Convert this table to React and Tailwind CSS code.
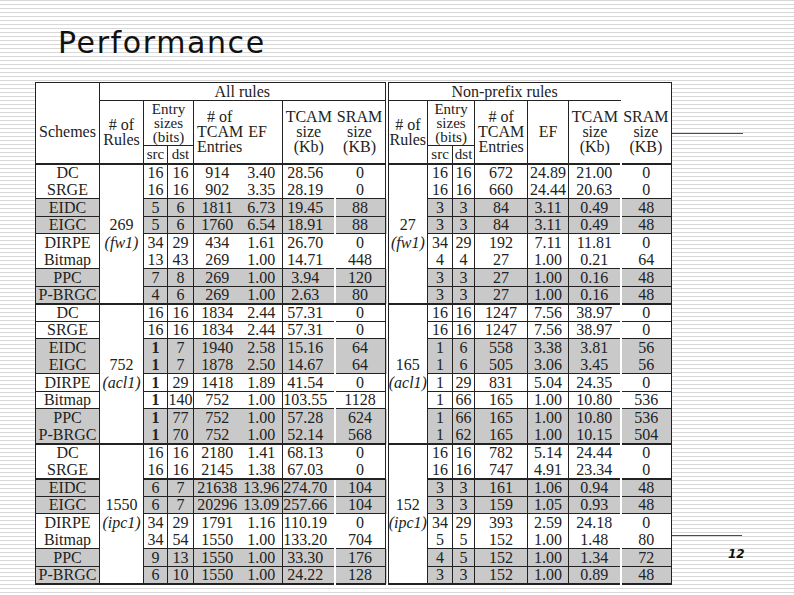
import React from 'react';

const schemes = ['DC', 'SRGE', 'EIDC', 'EIGC', 'DIRPE', 'Bitmap', 'PPC', 'P-BRGC'];
const shaded = [false, false, true, true, false, false, true, true];
const lineCls = ['', 'border-t', 'border-t-2'];

// each row: all rules (src, dst, entries, EF, TCAM, SRAM) then non-prefix rules (same)
const groups = [
  {
    all: ['269', 'fw1'],
    np: ['27', 'fw1'],
    lines: [0, 1, 1, 1, 0, 1, 1],
    rows: [
      ['16', '16', '914', '3.40', '28.56', '0', '16', '16', '672', '24.89', '21.00', '0'],
      ['16', '16', '902', '3.35', '28.19', '0', '16', '16', '660', '24.44', '20.63', '0'],
      ['5', '6', '1811', '6.73', '19.45', '88', '3', '3', '84', '3.11', '0.49', '48'],
      ['5', '6', '1760', '6.54', '18.91', '88', '3', '3', '84', '3.11', '0.49', '48'],
      ['34', '29', '434', '1.61', '26.70', '0', '34', '29', '192', '7.11', '11.81', '0'],
      ['13', '43', '269', '1.00', '14.71', '448', '4', '4', '27', '1.00', '0.21', '64'],
      ['7', '8', '269', '1.00', '3.94', '120', '3', '3', '27', '1.00', '0.16', '48'],
      ['4', '6', '269', '1.00', '2.63', '80', '3', '3', '27', '1.00', '0.16', '48'],
    ],
  },
  {
    all: ['752', 'acl1'],
    np: ['165', 'acl1'],
    lines: [1, 1, 0, 1, 1, 1, 0],
    boldOnes: true,
    rows: [
      ['16', '16', '1834', '2.44', '57.31', '0', '16', '16', '1247', '7.56', '38.97', '0'],
      ['16', '16', '1834', '2.44', '57.31', '0', '16', '16', '1247', '7.56', '38.97', '0'],
      ['1', '7', '1940', '2.58', '15.16', '64', '1', '6', '558', '3.38', '3.81', '56'],
      ['1', '7', '1878', '2.50', '14.67', '64', '1', '6', '505', '3.06', '3.45', '56'],
      ['1', '29', '1418', '1.89', '41.54', '0', '1', '29', '831', '5.04', '24.35', '0'],
      ['1', '140', '752', '1.00', '103.55', '1128', '1', '66', '165', '1.00', '10.80', '536'],
      ['1', '77', '752', '1.00', '57.28', '624', '1', '66', '165', '1.00', '10.80', '536'],
      ['1', '70', '752', '1.00', '52.14', '568', '1', '62', '165', '1.00', '10.15', '504'],
    ],
  },
  {
    all: ['1550', 'ipc1'],
    np: ['152', 'ipc1'],
    lines: [0, 2, 1, 1, 0, 1, 1],
    rows: [
      ['16', '16', '2180', '1.41', '68.13', '0', '16', '16', '782', '5.14', '24.44', '0'],
      ['16', '16', '2145', '1.38', '67.03', '0', '16', '16', '747', '4.91', '23.34', '0'],
      ['6', '7', '21638', '13.96', '274.70', '104', '3', '3', '161', '1.06', '0.94', '48'],
      ['6', '7', '20296', '13.09', '257.66', '104', '3', '3', '159', '1.05', '0.93', '48'],
      ['34', '29', '1791', '1.16', '110.19', '0', '34', '29', '393', '2.59', '24.18', '0'],
      ['34', '54', '1550', '1.00', '133.20', '704', '5', '5', '152', '1.00', '1.48', '80'],
      ['9', '13', '1550', '1.00', '33.30', '176', '4', '5', '152', '1.00', '1.34', '72'],
      ['6', '10', '1550', '1.00', '24.22', '128', '3', '3', '152', '1.00', '0.89', '48'],
    ],
  },
];

const colCls = [
  'border-r',
  'border-r',
  '',
  'border-r',
  'border-r-2 border-r-white',
  'border-r-4 border-double',
  'border-r',
  'border-r',
  'border-r',
  'border-r',
  'border-r-2 border-r-white',
  '',
];

const base = 'p-0 text-center align-middle whitespace-nowrap';

export default function App() {
  return (
    <div className="relative w-[794px] h-[595px] overflow-hidden bg-white bg-[repeating-linear-gradient(to_bottom,#d8d8d8_0px,#d8d8d8_1px,#ffffff_1px,#ffffff_4px)]">
      {/* Title */}
      <div className="h-[82px] pl-[58px] pt-[28px]">
        <h1 className="font-['DejaVu_Sans',sans-serif] text-[30px] leading-[30px] tracking-[1.6px] text-[#111]">Performance</h1>
      </div>

      {/* Results table */}
      <div className="pl-[35px]">
        <table className="w-[636px] table-fixed border-collapse border border-b-2 bg-white font-['Liberation_Serif',serif] text-[16px] text-[#222]">
          <colgroup>
            <col className="w-[64px]" />
            <col className="w-[44px]" />
            <col className="w-[24px]" />
            <col className="w-[26px]" />
            <col className="w-[47px]" />
            <col className="w-[42px]" />
            <col className="w-[52px]" />
            <col className="w-[52px]" />
            <col className="w-[41px]" />
            <col className="w-[25px]" />
            <col className="w-[22px]" />
            <col className="w-[53px]" />
            <col className="w-[41px]" />
            <col className="w-[52px]" />
            <col className="w-[51px]" />
          </colgroup>
          <tbody>
            <tr className="h-[18px]">
              <td className={`${base} border-r`}></td>
              <td colSpan={7} className={`${base} border-b border-r-4 border-double leading-[16px]`}>All rules</td>
              <td colSpan={6} className={`${base} border-b leading-[16px]`}>Non-prefix rules</td>
            </tr>
            <tr className="h-[45px]">
              <td rowSpan={2} className={`${base} border-r`}>Schemes</td>
              <td rowSpan={2} className={`${base} border-r leading-[15px]`}># of<br />Rules</td>
              <td colSpan={2} className={`${base} border-r border-b text-[15px] leading-[14px]`}>Entry<br />sizes<br />(bits)</td>
              <td colSpan={2} rowSpan={2} className={`${base} border-r`}>
                <div className="flex items-center pl-[3px]">
                  <div className="text-left leading-[15px]">
                    <div className="pl-[10px]"># of</div>
                    <div>TCAM</div>
                    <div>Entries</div>
                  </div>
                  <div className="ml-[5px]">EF</div>
                </div>
              </td>
              <td rowSpan={2} className={`${base} leading-[15px]`}>TCAM<br />size<br />(Kb)</td>
              <td rowSpan={2} className={`${base} border-r-4 border-double leading-[15px]`}>SRAM<br />size<br />(KB)</td>
              <td rowSpan={2} className={`${base} border-r leading-[15px]`}># of<br />Rules</td>
              <td colSpan={2} className={`${base} border-r border-b text-[15px] leading-[14px]`}>Entry<br />sizes<br />(bits)</td>
              <td rowSpan={2} className={`${base} border-r leading-[15px]`}># of<br />TCAM<br />Entries</td>
              <td rowSpan={2} className={`${base} border-r`}>EF</td>
              <td rowSpan={2} className={`${base} leading-[15px]`}>TCAM<br />size<br />(Kb)</td>
              <td rowSpan={2} className={`${base} leading-[15px]`}>SRAM<br />size<br />(KB)</td>
            </tr>
            <tr className="h-[18px]">
              <td className={`${base} border-r text-[15px] leading-[15px]`}>src</td>
              <td className={`${base} border-r text-[15px] leading-[15px]`}>dst</td>
              <td className={`${base} border-r text-[15px] leading-[15px]`}>src</td>
              <td className={`${base} border-r text-[15px] leading-[15px]`}>dst</td>
            </tr>

            {groups.map((g, gi) =>
              g.rows.map((row, i) => {
                const top = i === 0 ? 'border-t-2' : lineCls[g.lines[i - 1]];
                const bg = shaded[i] ? 'bg-[#c9c9c9]' : 'bg-white';
                return (
                  <tr key={`${gi}-${i}`} className="h-[17.5px] leading-[15px]">
                    <td className={`${base} ${top} ${bg} border-r`}>{schemes[i]}</td>
                    {i === 0 && (
                      <td rowSpan={8} className={`${base} border-t-2 border-r bg-white leading-[18px]`}>
                        {g.all[0]}
                        <br />
                        <span className="italic">({g.all[1]})</span>
                      </td>
                    )}
                    {row.slice(0, 6).map((v, ci) => (
                      <td
                        key={ci}
                        className={`${base} ${top} ${bg} ${colCls[ci]} ${ci === 4 ? 'pr-[6px]' : ''} ${ci === 0 && g.boldOnes && v === '1' ? 'font-bold' : ''}`}
                      >
                        {v}
                      </td>
                    ))}
                    {i === 0 && (
                      <td rowSpan={8} className={`${base} border-t-2 border-r bg-white leading-[18px]`}>
                        {g.np[0]}
                        <br />
                        <span className="italic">({g.np[1]})</span>
                      </td>
                    )}
                    {row.slice(6).map((v, ci) => (
                      <td key={ci + 6} className={`${base} ${top} ${bg} ${colCls[ci + 6]}`}>
                        {v}
                      </td>
                    ))}
                  </tr>
                );
              })
            )}
          </tbody>
        </table>
      </div>

      {/* slide decorations */}
      <div className="absolute left-[672px] top-[133px] h-px w-[71px] bg-[#a02828]"></div>
      <div className="absolute left-[672px] top-[535px] h-px w-[70px] bg-[#a02828]"></div>
      <div className="absolute left-[728px] top-[547px] font-['DejaVu_Sans',sans-serif] text-[12px] font-bold italic leading-[14px] text-[#111]">12</div>
    </div>
  );
}
